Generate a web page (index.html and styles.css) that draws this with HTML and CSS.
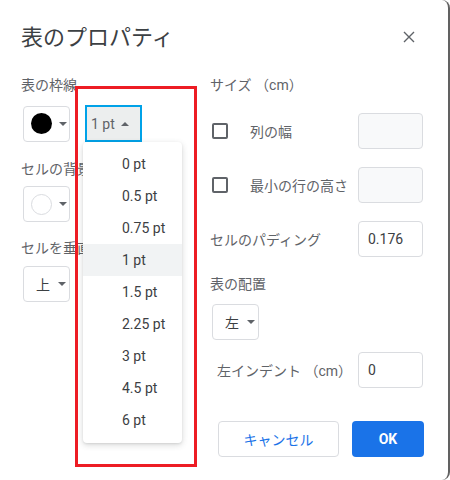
FILE: index.html
```html
<!DOCTYPE html>
<html lang="ja">
<head>
<meta charset="utf-8">
<title>表のプロパティ</title>
<link rel="stylesheet" href="styles.css">
</head>
<body>
<div class="dialog">
  <header class="header">
    <h1 class="title">表のプロパティ</h1>
    <button class="close" aria-label="閉じる">
      <svg width="12" height="12" viewBox="0 0 12 12"><path d="M1 1L11 11M11 1L1 11" stroke="#5f6368" stroke-width="1.4" fill="none"/></svg>
    </button>
  </header>
  <div class="content">
    <div class="col-left">
      <div class="label">表の枠線</div>
      <div class="pickers">
        <div class="picker">
          <span class="swatch swatch-black"></span>
          <span class="caret"></span>
        </div>
        <div class="size-btn">
          <span>1 pt</span>
          <span class="caret caret-up"></span>
        </div>
      </div>
      <div class="label label-2">セルの背景色</div>
      <div class="picker picker-2">
        <span class="swatch swatch-white"></span>
        <span class="caret"></span>
      </div>
      <div class="label label-3">セルを垂直方向に配置</div>
      <div class="picker picker-3">
        <span class="picker-text">上</span>
        <span class="caret"></span>
      </div>
    </div>
    <div class="col-right">
      <div class="label">サイズ （cm）</div>
      <div class="row row-1">
        <span class="checkbox"></span>
        <span class="row-label">列の幅</span>
        <span class="input input-disabled"></span>
      </div>
      <div class="row">
        <span class="checkbox"></span>
        <span class="row-label">最小の行の高さ</span>
        <span class="input input-disabled"></span>
      </div>
      <div class="row">
        <span class="row-label-plain">セルのパディング</span>
        <span class="input">0.176</span>
      </div>
      <div class="label label-align">表の配置</div>
      <div class="picker picker-align">
        <span class="picker-text">左</span>
        <span class="caret"></span>
      </div>
      <div class="row row-indent">
        <span class="row-label-plain">左インデント （cm）</span>
        <span class="input">0</span>
      </div>
      <div class="actions">
        <button class="btn btn-cancel">キャンセル</button>
        <button class="btn btn-ok">OK</button>
      </div>
    </div>
  </div>

  <ul class="menu">
    <li class="menu-item">0 pt</li>
    <li class="menu-item">0.5 pt</li>
    <li class="menu-item">0.75 pt</li>
    <li class="menu-item menu-item-active">1 pt</li>
    <li class="menu-item">1.5 pt</li>
    <li class="menu-item">2.25 pt</li>
    <li class="menu-item">3 pt</li>
    <li class="menu-item">4.5 pt</li>
    <li class="menu-item">6 pt</li>
  </ul>
  <div class="highlight"></div>
</div>
</body>
</html>
```

FILE: styles.css
```css
* { box-sizing: border-box; }

html, body {
  margin: 0;
  padding: 0;
  background: #ffffff;
}

body {
  width: 450px;
  height: 480px;
  overflow: hidden;
  font-family: Roboto, "Noto Sans CJK JP", sans-serif;
  color: #3c4043;
}

.dialog {
  position: relative;
  width: 450px;
  height: 480px;
  background: #ffffff;
  border-right: 2px solid #616161;
  border-radius: 0 8px 8px 0;
  padding: 24px 0 0 21px;
}

.header {
  display: flex;
  align-items: center;
  justify-content: space-between;
  height: 28px;
  padding-right: 33px;
}

.title {
  margin: 0;
  font-size: 22px;
  font-weight: 400;
  line-height: 28px;
  color: #3c4043;
}

.close {
  border: none;
  background: none;
  padding: 0;
  width: 12px;
  height: 12px;
  display: flex;
  margin-top: -2px;
}

.content {
  display: grid;
  grid-template-columns: 189px 214px;
  margin-top: 23px;
}

.col-left, .col-right {
  display: flex;
  flex-direction: column;
  align-items: flex-start;
}

.label {
  font-size: 14px;
  line-height: 20px;
  color: #5f6368;
  white-space: nowrap;
}

.label-2 { margin-top: 17px; }
.label-3 { margin-top: 16px; }

.pickers {
  display: flex;
  align-items: center;
  gap: 15px;
  margin-top: 10px;
  margin-left: 2px;
}

.picker {
  display: flex;
  align-items: center;
  width: 47px;
  height: 36px;
  border: 1px solid #dadce0;
  border-radius: 4px;
  padding-left: 7px;
  background: #ffffff;
}

.picker-2 { margin-top: 7px; margin-left: 2px; }
.picker-3 { margin-top: 8px; margin-left: 2px; }

.swatch {
  width: 21px;
  height: 21px;
  border-radius: 50%;
  flex: none;
}

.swatch-black { background: #000000; }
.swatch-white { background: #ffffff; border: 1px solid #dadce0; }

.caret {
  width: 0;
  height: 0;
  border-left: 4px solid transparent;
  border-right: 4px solid transparent;
  border-top: 4px solid #5f6368;
  margin-left: 7px;
  flex: none;
}

.caret-up {
  border-top: none;
  border-bottom: 4px solid #5f6368;
  margin-left: 6px;
}

.picker-text {
  font-size: 14px;
  color: #3c4043;
  margin-left: 5px;
  width: 15px;
}

.size-btn {
  display: flex;
  align-items: center;
  width: 57px;
  height: 37px;
  border: 2px solid #00a2e8;
  background: #eceeee;
  padding-left: 4px;
  font-size: 14px;
  color: #5f6368;
}

.row {
  display: flex;
  align-items: center;
  width: 213px;
  height: 36px;
  margin-top: 18px;
}

.row-1 { margin-top: 18px; }

.checkbox {
  width: 16px;
  height: 16px;
  border: 2px solid #5f6368;
  border-radius: 2px;
  margin-left: 2px;
  flex: none;
}

.row-label {
  margin-left: 22px;
  font-size: 14px;
  color: #5f6368;
  white-space: nowrap;
}

.row-label-plain {
  font-size: 14px;
  color: #5f6368;
  white-space: nowrap;
}

.input {
  margin-left: auto;
  width: 65px;
  height: 36px;
  border: 1px solid #dadce0;
  border-radius: 4px;
  background: #ffffff;
  font-size: 14px;
  color: #3c4043;
  display: flex;
  align-items: center;
  padding-left: 9px;
}

.input-disabled { background: #f8f9fa; }

.label-align { margin-top: 17px; }

.picker-align {
  margin-top: 10px;
  margin-left: 2px;
}

.row-indent {
  margin-top: 12px;
  padding-left: 7px;
}

.actions {
  display: flex;
  justify-content: flex-end;
  gap: 13px;
  width: 214px;
  margin-top: 33px;
}

.btn {
  height: 36px;
  border-radius: 4px;
  font-family: Roboto, "Noto Sans CJK JP", sans-serif;
  font-size: 14px;
  padding: 0;
}

.btn-cancel {
  width: 121px;
  border: 1px solid #dadce0;
  background: #ffffff;
  color: #1a73e8;
}

.btn-ok {
  width: 72px;
  border: none;
  background: #1a73e8;
  color: #ffffff;
  font-weight: 700;
}

.menu {
  position: absolute;
  left: 83px;
  top: 142px;
  width: 99px;
  margin: 0;
  padding: 6px 0 7px;
  list-style: none;
  background: #ffffff;
  border-radius: 4px;
  box-shadow: 0 2px 6px rgba(60, 64, 67, 0.2), 0 1px 2px rgba(60, 64, 67, 0.1);
}

.menu-item {
  height: 32px;
  line-height: 32px;
  padding-left: 39px;
  font-size: 14px;
  color: #3c4043;
}

.menu-item-active { background: #f1f3f4; }

.highlight {
  position: absolute;
  left: 75px;
  top: 86px;
  width: 122px;
  height: 381px;
  border: 3px solid #ed1c24;
}
```
